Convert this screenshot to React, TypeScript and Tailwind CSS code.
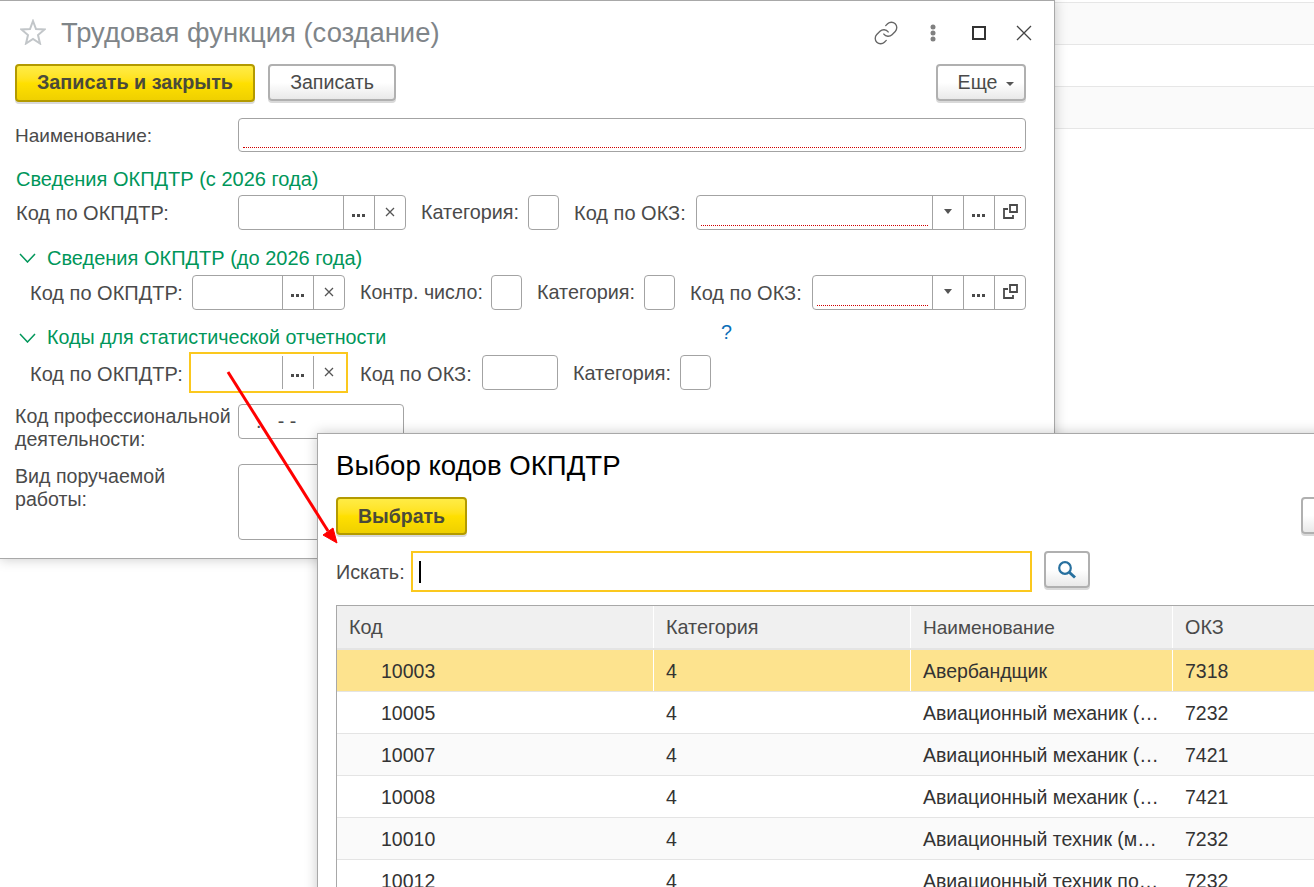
import type { ReactNode } from "react"
import { Link } from "lucide-react"

const font = "font-['Liberation_Sans',Arial,sans-serif]"

function YellowButton({ children, className }: { children: ReactNode; className: string }) {
  return (
    <button className={`h-[38px] shrink-0 rounded-[4px] border-2 border-[#b39a00] bg-gradient-to-b from-[#ffec45] via-[#ffe000] to-[#efd000] font-bold text-[#4a4a3a] shadow-[0_2px_0_#d9d9d9] ${className}`}>
      {children}
    </button>
  )
}

function GrayButton({ children, className }: { children: ReactNode; className: string }) {
  return (
    <button className={`flex h-[37px] shrink-0 items-center justify-center rounded-[4px] border-2 border-[#b0b0b0] bg-gradient-to-b from-white via-white to-[#e9e9e9] text-[19.6px] text-[#4a4a4a] shadow-[0_2px_0_#d9d9d9] ${className}`}>
      {children}
    </button>
  )
}

function Dots() {
  return (
    <svg width="14" height="4" viewBox="0 0 14 4" className="mt-[6px]">
      <rect x="0" y="0" width="3" height="3" fill="#4a4a4a" />
      <rect x="5" y="0" width="3" height="3" fill="#4a4a4a" />
      <rect x="10" y="0" width="3" height="3" fill="#4a4a4a" />
    </svg>
  )
}

function Cross() {
  return (
    <svg width="10" height="10" viewBox="0 0 10 10" className="-mt-[2px]">
      <path d="M1 1 L9 9 M9 1 L1 9" stroke="#555" strokeWidth="1.3" />
    </svg>
  )
}

function Caret() {
  return (
    <svg width="8" height="5" viewBox="0 0 8 5" className="-mt-[2px]">
      <path d="M0 0 H8 L4 5 Z" fill="#555" />
    </svg>
  )
}

function OpenIcon() {
  return (
    <svg width="15" height="15" viewBox="0 0 15 15" className="-mt-[3px]">
      <path d="M7 1 H14 V8 H7 Z" fill="none" stroke="#4a4a4a" strokeWidth="1.8" />
      <path d="M5 5 H1 V14 H10 V11" fill="none" stroke="#4a4a4a" strokeWidth="1.8" />
    </svg>
  )
}

function Seg({ children }: { children: ReactNode }) {
  return <div className="flex w-[31px] shrink-0 items-center justify-center border-l border-[#a3a3a3]">{children}</div>
}

function Underline() {
  return (
    <div className="flex flex-1 items-end px-[4px] pb-[3px]">
      <div className="w-full border-b border-dotted border-[#d00000]" />
    </div>
  )
}

function CodeField({ w }: { w: string }) {
  return (
    <div className={`flex h-[35px] shrink-0 rounded-[4px] border border-[#a3a3a3] ${w}`}>
      <div className="flex-1" />
      <Seg><Dots /></Seg>
      <Seg><Cross /></Seg>
    </div>
  )
}

function OkzField({ w }: { w: string }) {
  return (
    <div className={`flex h-[35px] shrink-0 rounded-[4px] border border-[#a3a3a3] ${w}`}>
      <Underline />
      <Seg><Caret /></Seg>
      <Seg><Dots /></Seg>
      <Seg><OpenIcon /></Seg>
    </div>
  )
}

function Box({ w }: { w: string }) {
  return <div className={`h-[35px] shrink-0 rounded-[4px] border border-[#a3a3a3] ${w}`} />
}

function Chevron() {
  return (
    <svg width="17" height="10" viewBox="0 0 17 10">
      <path d="M1 1 L8.5 9 L16 1" fill="none" stroke="#00965a" strokeWidth="1.5" />
    </svg>
  )
}

const rows = [
  { code: "10003", name: "Авербандщик", okz: "7318" },
  { code: "10005", name: "Авиационный механик (…", okz: "7232" },
  { code: "10007", name: "Авиационный механик (…", okz: "7421" },
  { code: "10008", name: "Авиационный механик (…", okz: "7421" },
  { code: "10010", name: "Авиационный техник (м…", okz: "7232" },
  { code: "10012", name: "Авиационный техник по…", okz: "7232" },
]

const cols = "grid grid-cols-[317px_257px_262px_1fr]"

export default function App() {
  return (
    <div className={`relative h-[887px] w-[1314px] overflow-hidden bg-white text-[19.8px] text-[#4a4a4a] ${font}`}>
      {/* list behind the windows */}
      <div className="ml-[1054px] pt-[2px]">
        <div className="h-[43px] border-y border-[#e6e6e6] bg-[#fafafa]" />
        <div className="h-[42px] border-b border-[#e6e6e6]" />
        <div className="h-[42px] border-b border-[#e6e6e6] bg-[#fafafa]" />
      </div>

      {/* main form window */}
      <div className="absolute left-0 top-0 h-[559px] w-[1055px] border-b border-r border-t border-[#a8a8a8] bg-white shadow-[0_0_12px_rgba(0,0,0,0.22)]">
        <div className="flex h-[63px] items-center pl-[20px] pr-[21px]">
          <svg width="26" height="26" viewBox="0 0 26 26" className="-mt-[2px]">
            <path d="M13 2 L16 10 L24.500 10.500 L18 16 L20 24.500 L13 20 L6 24.500 L8 16 L1.500 10.500 L10 10 Z" fill="none" stroke="#c2c6c9" strokeWidth="2" />
          </svg>
          <div className="ml-[15px] flex-1 text-[27.4px] leading-none text-[#7f8589]">Трудовая функция (создание)</div>
          <Link size={26} strokeWidth={1.25} color="#666" />
          <svg width="8" height="18" viewBox="0 0 8 18" className="ml-[30px]">
            <circle cx="4" cy="3" r="2.500" fill="#808080" />
            <circle cx="4" cy="9" r="2.500" fill="#808080" />
            <circle cx="4" cy="15" r="2.500" fill="#808080" />
          </svg>
          <div className="ml-[35px] h-[14px] w-[14px] border-2 border-[#333]" />
          <svg width="18" height="18" viewBox="0 0 18 18" className="ml-[29px]">
            <path d="M2 2 L16 16 M16 2 L2 16" stroke="#444" strokeWidth="1.3" />
          </svg>
        </div>

        <div className="flex items-start pl-[15px] pr-[28px]">
          <YellowButton className="w-[240px] text-[19.8px]">Записать и закрыть</YellowButton>
          <GrayButton className="ml-[13px] w-[128px]">Записать</GrayButton>
          <GrayButton className="ml-auto w-[90px]">
            <span className="ml-[10px]">Еще</span>
            <svg width="8" height="4" viewBox="0 0 8 4" className="ml-[9px] mt-[2px]">
              <path d="M0 0 H8 L4 4 Z" fill="#555" />
            </svg>
          </GrayButton>
        </div>

        <div className="mt-[16px] flex h-[34px] items-center pl-[15px] pr-[28px]">
          <div className="w-[223px] pt-[2px] text-[19px]">Наименование:</div>
          <div className="flex h-[34px] flex-1 rounded-[4px] border border-[#a3a3a3]"><Underline /></div>
        </div>

        <div className="mt-[17px] h-[21px] pl-[16px] text-[20px] leading-[21px] text-[#00965a]">Сведения ОКПДТР (с 2026 года)</div>

        <div className="mt-[5px] flex items-center pl-[16px]">
          <div className="w-[222px] text-[20px]">Код по ОКПДТР:</div>
          <CodeField w="w-[168px]" />
          <div className="ml-[15px] w-[107px]">Категория:</div>
          <Box w="w-[31px]" />
          <div className="ml-[15px] w-[122px] text-[20px]">Код по ОКЗ:</div>
          <OkzField w="w-[330px]" />
        </div>

        <div className="mt-[17px] flex h-[21px] items-center pl-[19px] text-[20px] text-[#00965a]">
          <Chevron />
          <span className="ml-[11px]">Сведения ОКПДТР (до 2026 года)</span>
        </div>

        <div className="mt-[7px] flex items-center pl-[30px]">
          <div className="w-[162px] text-[20px]">Код по ОКПДТР:</div>
          <CodeField w="w-[153px]" />
          <div className="ml-[15px] w-[131px] text-[19.6px]">Контр. число:</div>
          <Box w="w-[31px]" />
          <div className="ml-[15px] w-[107px]">Категория:</div>
          <Box w="w-[31px]" />
          <div className="ml-[15px] w-[122px] text-[20px]">Код по ОКЗ:</div>
          <OkzField w="w-[214px]" />
        </div>

        <div className="relative mt-[17px] flex h-[21px] items-center pl-[19px] text-[19.7px] text-[#00965a]">
          <Chevron />
          <span className="ml-[11px]">Коды для статистической отчетности</span>
          <span className="absolute left-[721px] top-[-9px] text-[#0b6fb8]">?</span>
        </div>

        <div className="mt-[4px] flex h-[41px] items-center pl-[30px]">
          <div className="w-[159px] pt-[2px] text-[20px]">Код по ОКПДТР:</div>
          <div className="flex h-[41px] w-[159px] shrink-0 border-2 border-[#fbc81e] py-[2px]">
            <div className="flex-1" />
            <Seg><Dots /></Seg>
            <Seg><Cross /></Seg>
            <div className="w-[2px]" />
          </div>
          <div className="ml-[12px] w-[122px] pt-[2px] text-[20px]">Код по ОКЗ:</div>
          <Box w="w-[76px]" />
          <div className="ml-[15px] w-[107px] pt-[2px]">Категория:</div>
          <Box w="w-[31px]" />
        </div>

        <div className="mt-[11px] flex items-start pl-[15px] text-[19.6px]">
          <div className="w-[223px] pt-[1px] leading-[23px]">Код профессиональной<br />деятельности:</div>
          <div className="flex h-[35px] w-[166px] items-center whitespace-pre rounded-[4px] border border-[#a3a3a3] pl-[17px]">.   - -</div>
        </div>

        <div className="mt-[13px] flex items-start pl-[15px] text-[19.6px]">
          <div className="w-[223px] pt-[1px] leading-[23px]">Вид поручаемой<br />работы:</div>
          <div className="h-[76px] w-[166px] rounded-[4px] border border-[#a3a3a3]" />
        </div>
      </div>

      {/* code picker window */}
      <div className="absolute left-[317px] top-[433px] h-[470px] w-[1040px] border border-[#a8a8a8] bg-white pl-[18px] shadow-[0_0_12px_rgba(0,0,0,0.22)]">
        <div className="flex h-[63px] items-center text-[27.6px] leading-none text-black">Выбор кодов ОКПДТР</div>
        <div className="flex items-start">
          <YellowButton className="w-[131px] pt-[2px] text-[19.5px]">Выбрать</YellowButton>
          <GrayButton className="ml-[834px] w-[40px]">{""}</GrayButton>
        </div>
        <div className="mt-[16px] flex items-start">
          <div className="flex h-[41px] w-[75px] items-center pt-[2px]">Искать:</div>
          <div className="flex h-[41px] w-[621px] items-center border-2 border-[#fbc81e] pl-[6px]">
            <div className="h-[22px] w-[2px] bg-black" />
          </div>
          <GrayButton className="ml-[12px] w-[46px]">
            <svg width="20" height="20" viewBox="0 0 20 20">
              <circle cx="8" cy="8" r="5.800" fill="none" stroke="#27709f" strokeWidth="2.200" />
              <path d="M12.500 12.500 L18 17.500" stroke="#27709f" strokeWidth="3" />
            </svg>
          </GrayButton>
        </div>

        <div className="mt-[13px] border-l border-t border-[#a8a8a8]">
          <div className={`${cols} h-[44px] border-b-[2px] border-[#e4e4e4] bg-[#f0f0f0]`}>
            <div className="flex items-center border-r border-white pl-[12px] pt-[2px]">Код</div>
            <div className="flex items-center border-r border-white pl-[12px] pt-[2px]">Категория</div>
            <div className="flex items-center border-r border-white pl-[12px] pt-[2px] text-[19px]">Наименование</div>
            <div className="flex items-center pl-[12px] pt-[2px]">ОКЗ</div>
          </div>
          {rows.map((r, i) => (
            <div
              key={r.code}
              className={`${cols} h-[42px] border-b border-[#e4e4e4] text-[19.5px] text-[#333] ${i === 0 ? "bg-[#fde38e]" : i % 2 === 0 ? "bg-[#fafafa]" : "bg-white"}`}
            >
              <div className={`flex items-center pl-[44px] pt-[2px] ${i === 0 ? "border-r border-white" : ""}`}>{r.code}</div>
              <div className={`flex items-center pl-[12px] pt-[2px] ${i === 0 ? "border-r border-white" : ""}`}>4</div>
              <div className={`flex items-center pl-[12px] pt-[2px] ${i === 0 ? "border-r border-white" : ""}`}>{r.name}</div>
              <div className="flex items-center pl-[12px] pt-[2px]">{r.okz}</div>
            </div>
          ))}
        </div>
      </div>

      {/* red annotation arrow */}
      <svg className="absolute left-0 top-0" width="1314" height="887" viewBox="0 0 1314 887">
        <path d="M228 372 L328 531" stroke="#ff0000" strokeWidth="3" fill="none" />
        <path d="M337 543 L323 535 L333 528 Z" fill="#ff0000" stroke="#ff0000" />
      </svg>
    </div>
  )
}
